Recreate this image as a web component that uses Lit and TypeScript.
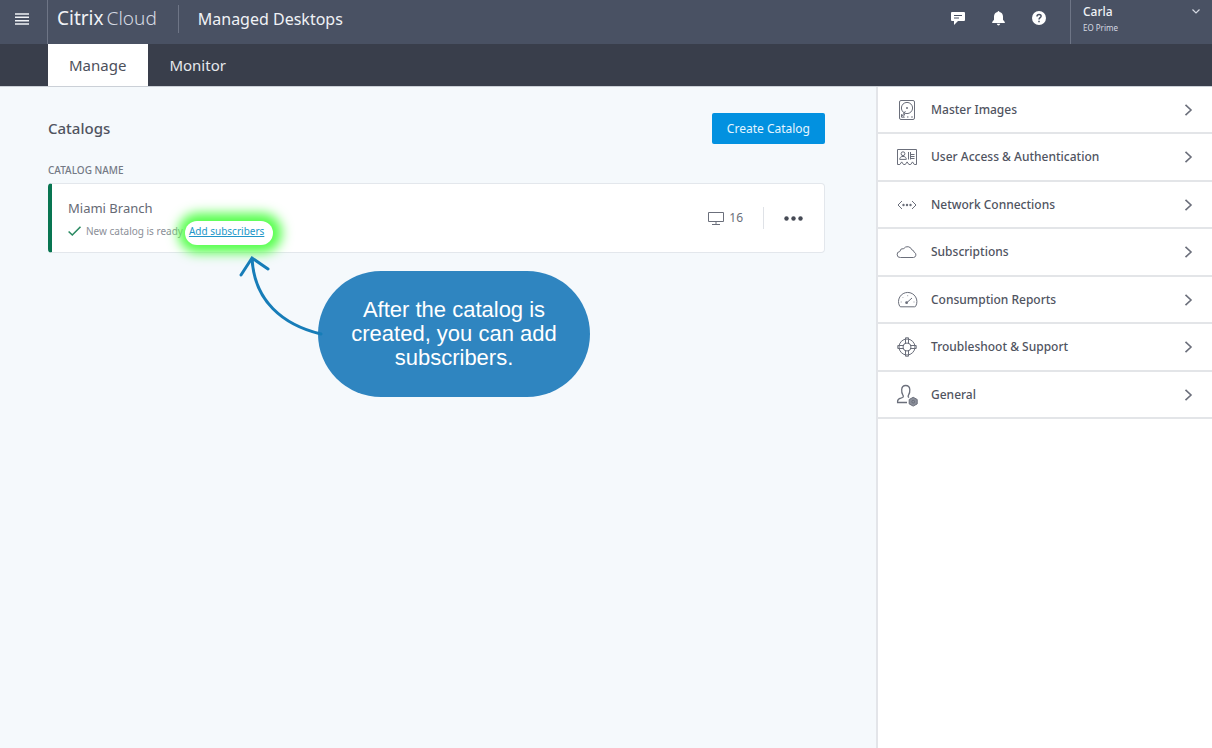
import { LitElement, html, css, svg } from "lit";
import { customElement } from "lit/decorators.js";

const sections = [
  {
    label: "Master Images",
    icon: svg`<rect x="2.5" y="0.5" width="15" height="19" rx="1.5"/><circle cx="10" cy="8" r="5.6"/><circle cx="10" cy="8" r="1" class="solid"/><path d="M8.4 11.2 4.6 16.6M4.5 14.2v3h3.2M8 13.4l-1.6 3.2"/><circle cx="15" cy="17" r=".8" class="solid"/><circle cx="10.8" cy="17" r=".7" class="solid"/>`,
  },
  {
    label: "User Access & Authentication",
    icon: svg`<path d="M.5 17.5V2.5h19v15h-2.2l-1.8-2.6-1.8 2.6h-1.8l-1.8-2.6-1.8 2.6H6.5l-1.8-2.6-1.800 2.600z"/><circle cx="6" cy="6.700" r="1.900"/><path d="M2.700 12.400c0-1.600 1-2.600 2.300-2.900h2c1.300.3 2.300 1.300 2.300 2.900zM11.500 5v7.500M13.500 5v7.500M13.500 7.500h4M13.500 9.500h4M13.500 11.500h4"/>`,
  },
  {
    label: "Network Connections",
    icon: svg`<path d="M5 6 1 10l4 4M15 6l4 4-4 4"/><circle cx="6.500" cy="10" r="1.200" class="solid"/><circle cx="10" cy="10" r="1.200" class="solid"/><circle cx="13.500" cy="10" r="1.200" class="solid"/>`,
  },
  {
    label: "Subscriptions",
    icon: svg`<path d="M3.500 15.500a3 3 0 0 1-.7-6 3.500 3.500 0 0 1 4-2.900A4.500 4.500 0 0 1 14.800 7.800a3 3 0 0 1 2.400 2.500 2.700 2.700 0 0 1-.7 5.200z"/>`,
  },
  {
    label: "Consumption Reports",
    icon: svg`<path d="M2.600 16A9.200 9.200 0 1 1 18.800 16q-.3.800-1.200.8H3.800q-.9 0-1.200-.8z"/><path d="m15 8-5 4.500"/><circle cx="9.600" cy="12.700" r="1.400" class="solid"/><path d="M3.700 12h1M16.500 12h1M10.700 5.200v1M5.600 7.200l.7.700" stroke-width=".7"/>`,
  },
  {
    label: "Troubleshoot & Support",
    icon: svg`<circle cx="10" cy="10" r="8"/><circle cx="10" cy="10" r="4"/><path d="M8.500 6.200V.8h3v5.400M8.500 13.800v5.400h3v-5.400M6.200 8.500H.8v3h5.400M13.800 8.500h5.400v3h-5.400"/>`,
  },
  {
    label: "General",
    icon: svg`<path d="M10 17.500H.6v-1.300c0-1.700 1.300-2.500 3.200-3l1.700-.7c1-.5 1-1.500.4-2.300C4.800 8.500 4.500 6.800 4.700 4.500 4.900 1.900 6.400.5 8.700.5s3.900 1.400 4.100 4c.2 2.300-.2 4-1.300 5.700-.6.900-.5 1.900.6 2.300" stroke-width="1.300"/><path class="gear" d="m16.200 12.300 4 2.200v4.400l-4 2.200-4-2.200v-4.400z"/><circle cx="16.200" cy="16.700" r="1.400"/>`,
  },
];

@customElement("app-root")
export class AppRoot extends LitElement {
  static styles = css`
    :host {
      display: flex;
      flex-direction: column;
      min-height: 100vh;
      background: #f5f9fc;
      color: #50545f;
      font-family: "Noto Sans", "Open Sans", sans-serif;
      font-size: 12px;
      line-height: 16px;
    }
    * {
      box-sizing: border-box;
    }
    button {
      font: inherit;
      color: inherit;
      background: none;
      border: 0;
      padding: 0;
      cursor: pointer;
    }
    h1, h2, h3, p, ul {
      margin: 0;
      padding: 0;
      font-weight: 400;
    }
    svg {
      display: block;
      flex: none;
      overflow: visible;
    }
    .top {
      display: flex;
      align-items: stretch;
      height: 44px;
      background: #495163;
      color: #f0f2f6;
    }
    .menu {
      display: grid;
      place-items: center;
      width: 48px;
      border-right: 1px solid #6e7586;
      padding-bottom: 6px;
      padding-right: 3px;
    }
    .brand {
      display: flex;
      align-items: center;
      padding: 0 21px 8px 9px;
      font-size: 19px;
      line-height: 24px;
      gap: 3px;
    }
    .light {
      font-weight: 300;
      color: #d5d9e2;
    }
    .product {
      display: flex;
      align-items: center;
      align-self: center;
      height: 28px;
      margin-bottom: 6px;
      padding-left: 19px;
      border-left: 1px solid #6e7586;
      font-size: 16px;
      line-height: 24px;
    }
    .actions {
      display: flex;
      align-items: center;
      gap: 25px;
      margin-left: auto;
      padding: 0 24px 8px 0;
    }
    .account {
      display: flex;
      justify-content: space-between;
      align-items: flex-start;
      width: 142px;
      border-left: 1px solid #6e7586;
      padding: 4px 12px 0;
      text-align: left;
    }
    .who {
      display: flex;
      flex-direction: column;
    }
    .name {
      font-weight: 500;
    }
    .org {
      font-size: 8px;
      color: #d5d9e2;
    }
    .chevron {
      margin-top: 5px;
    }
    .tabs {
      display: flex;
      height: 42px;
      padding-left: 48px;
      background: #393e4b;
    }
    .tab {
      padding: 0 22px 0 21px;
      font-size: 15px;
      line-height: 43px;
      color: #e6e8ed;
      text-decoration: none;
    }
    .tab.current {
      background: #fff;
      color: #4c505b;
    }
    .body {
      display: flex;
      flex: 1;
      border-top: 1px solid #cbd0d7;
    }
    main {
      flex: 1;
      padding: 26px 51px 0 48px;
    }
    .heading {
      display: flex;
      align-items: center;
      justify-content: space-between;
      margin-bottom: 18px;
    }
    .heading h1 {
      padding-bottom: 2px;
      font-size: 15px;
      line-height: 20px;
      font-weight: 500;
    }
    .create {
      height: 31px;
      padding: 0 15px;
      border-radius: 2px;
      background: #0291e0;
      color: #e4f5ff;
    }
    .column {
      font-size: 10px;
      font-weight: 500;
      line-height: 16px;
      color: #747985;
      margin-bottom: 5px;
    }
    .card {
      display: flex;
      align-items: center;
      height: 70px;
      padding: 0 21px 0 16px;
      background: #fff;
      border: 1px solid #e3e7ec;
      border-left: 4px solid #087551;
      border-radius: 4px;
    }
    .info {
      flex: 1;
      padding-top: 6px;
    }
    .info h3 {
      font-size: 13px;
      line-height: 18px;
      color: #666a75;
    }
    .status {
      position: relative;
      display: flex;
      align-items: center;
      height: 24px;
      margin-top: 2px;
      font-size: 10px;
      color: #8b8f98;
    }
    .status svg.tick {
      margin-right: 5px;
    }
    .add {
      margin: 4px 0 0 2px;
      padding: 2px 9px 6px 4px;
      border-radius: 12px;
      background: #fff;
      box-shadow: 1px 0 12px 8px #55ff4c;
      color: #2196c8;
      position: relative;
    }
    .callout {
      position: absolute;
      left: 250px;
      top: 52px;
      width: 272px;
      padding: 27px 20px;
      border-radius: 64px;
      background: #2f85c0;
      color: #fff;
      font-family: "Liberation Sans", Arial, sans-serif;
      font-size: 22px;
      line-height: 24px;
      text-align: center;
    }
    .arrow {
      position: absolute;
      left: -80px;
      top: -16px;
    }
    .count {
      display: flex;
      align-items: center;
      gap: 5px;
      padding-right: 20px;
      color: #6b6f79;
    }
    .more {
      height: 22px;
      padding-left: 20px;
      border-left: 1px solid #dfe2e7;
    }
    aside {
      width: 336px;
      background: #fff;
      border-left: 2px solid #e3e5e9;
    }
    aside ul {
      list-style: none;
    }
    .row {
      height: 47px;
      border-bottom: 2px solid #e3e5e8;
    }
    .row:nth-child(even) {
      height: 48px;
    }
    .row button {
      display: flex;
      align-items: center;
      width: 100%;
      height: 100%;
      padding: 0 19px;
      gap: 14px;
      font-weight: 500;
      text-align: left;
    }
    .row span {
      flex: 1;
    }
    .icon {
      fill: none;
      stroke: #6b6f7b;
    }
    .solid {
      fill: #6b6f7b;
      stroke: none;
    }
    .gear {
      fill: #8b8f9a;
    }
  `;

  render() {
    return html`
      <header class="top">
        <button class="menu" aria-label="Menu">
          <svg width="14" height="12" viewBox="0 0 14 12" stroke="#f0f2f6" stroke-width="1.500"><path d="M0 1h14M0 4.300h14M0 7.700h14M0 11h14" /></svg>
        </button>
        <div class="brand"><span>Citrix</span><span class="light">Cloud</span></div>
        <h2 class="product">Managed Desktops</h2>
        <div class="actions">
          <button aria-label="Feedback">
            <svg width="14" height="13" viewBox="0 0 14 13"><path fill="#fff" d="M1 0h12q1 0 1 1v7q0 1-1 1H7l-4 4V9H1Q0 9 0 8V1q0-1 1-1z" /><path stroke="#495163" d="M3 3.500h8M3 6h5" /></svg>
          </button>
          <button aria-label="Notifications">
            <svg width="17" height="15" viewBox="0 0 17 15" fill="#fff"><path d="M8.500 0q.9 0 .9 1c2.300.5 3.600 2.200 3.600 4.500v3.300l1.800 2.100V12H2.200v-1.100L4 8.800V5.500C4 3.200 5.300 1.500 7.600 1q0-1 .9-1zM6.800 12.800h3.400Q9.800 14.400 8.500 14.400T6.800 12.800z" /></svg>
          </button>
          <button aria-label="Help">
            <svg width="14" height="14" viewBox="0 0 14 14"><circle cx="7" cy="7" r="7" fill="#fff" /><path fill="none" stroke="#495163" stroke-width="1.500" d="M5 5.400C5 2.700 9.200 2.800 9.100 5.200 9 6.700 7 6.700 7 8.500M7 9.700v1.500" /></svg>
          </button>
        </div>
        <button class="account">
          <span class="who"><span class="name">Carla</span><span class="org">EO Prime</span></span>
          <svg class="chevron" width="8" height="5" viewBox="0 0 8 5" fill="none" stroke="#d5d9e2" stroke-width="1.200"><path d="m.5.5 3.500 3.500L7.500.5" /></svg>
        </button>
      </header>
      <nav class="tabs">
        <a class="tab current" href="#manage" aria-current="page">Manage</a>
        <a class="tab" href="#monitor">Monitor</a>
      </nav>
      <div class="body">
        <main>
          <div class="heading">
            <h1>Catalogs</h1>
            <button class="create">Create Catalog</button>
          </div>
          <h2 class="column">CATALOG NAME</h2>
          <section class="card">
            <div class="info">
              <h3>Miami Branch</h3>
              <div class="status">
                <svg class="tick" width="13" height="10" viewBox="0 0 13 10" fill="none" stroke="#2a8a62" stroke-width="1.600"><path d="M.6 5.500 4.300 9 12.500.8" /></svg>
                <span>New catalog is ready</span>
                <a class="add" href="#subscribers">Add subscribers</a>
                <div class="callout" role="note">
                  After the catalog is created, you can add subscribers.
                  <svg class="arrow" width="90" height="84" viewBox="0 0 90 84" fill="none" stroke="#177db8" stroke-width="3" stroke-linecap="round"><path d="M83 79C45 70 16 46 14 3M3 20 14 3l16 11" /></svg>
                </div>
              </div>
            </div>
            <div class="count">
              <svg width="16" height="13" viewBox="0 0 16 13" fill="none" stroke="#6b6f7b"><path d="M.5.500h15v9H.5zM8 9.500v3M4 12.500h8" /></svg>
              <span>16</span>
            </div>
            <button class="more" aria-label="More actions">
              <svg width="19" height="5" viewBox="0 0 19 5" fill="#464a55"><circle cx="2.500" cy="2.500" r="2.200" /><circle cx="9.500" cy="2.500" r="2.200" /><circle cx="16.500" cy="2.500" r="2.200" /></svg>
            </button>
          </section>
        </main>
        <aside>
          <ul>
            ${sections.map(
              (s) => html`<li class="row">
                <button>
                  <svg class="icon" width="20" height="20" viewBox="0 0 20 20">${s.icon}</svg>
                  <span>${s.label}</span>
                  <svg class="icon" width="9" height="12" viewBox="0 0 9 12" stroke-width="1.600"><path d="m1.500.800 5.500 5.200-5.500 5.200" /></svg>
                </button>
              </li>`
            )}
          </ul>
        </aside>
      </div>
    `;
  }
}
